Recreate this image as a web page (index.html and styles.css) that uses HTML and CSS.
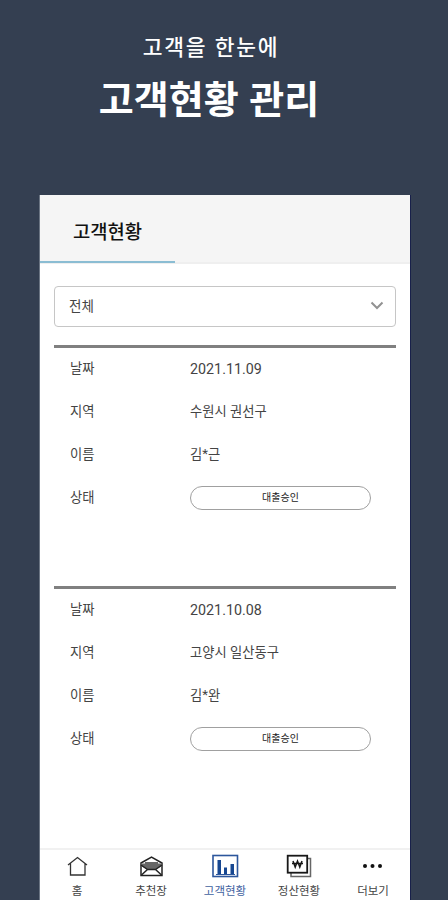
FILE: index.html
```
<!DOCTYPE html>
<html lang="ko">
<head>
<meta charset="UTF-8">
<meta name="viewport" content="width=device-width, initial-scale=1.0">
<title>고객현황 관리</title>
<link rel="stylesheet" href="styles.css">
</head>
<body>

<div class="intro">
    <p class="intro-sub">고객을 한눈에</p>
    <h1 class="intro-title">고객현황 관리</h1>
</div>

<div class="phone">
    <div class="page-head">
        <h2 class="page-tab">고객현황</h2>
    </div>

    <div class="content">
        <div class="select">
            <span>전체</span>
            <svg width="14" height="9" viewBox="0 0 14 9" fill="none" stroke="#929292" stroke-width="2">
                <path d="M1.5 1.5L7 7L12.5 1.5"/>
            </svg>
        </div>

        <dl class="customer">
            <dt>날짜</dt><dd class="date">2021.11.09</dd>
            <dt>지역</dt><dd>수원시 권선구</dd>
            <dt>이름</dt><dd>김<span class="mask">*</span>근</dd>
            <dt>상태</dt><dd><span class="status">대출승인</span></dd>
        </dl>

        <dl class="customer">
            <dt>날짜</dt><dd class="date">2021.10.08</dd>
            <dt>지역</dt><dd>고양시 일산동구</dd>
            <dt>이름</dt><dd>김<span class="mask">*</span>완</dd>
            <dt>상태</dt><dd><span class="status">대출승인</span></dd>
        </dl>
    </div>

    <nav class="tabbar">
        <a class="tab">
            <svg width="28" height="24" viewBox="0 0 28 24" fill="none" stroke="#333" stroke-width="1.3">
                <path d="M5 11L14.500 3.500l9.500 7.500M7.500 9.500v11.500h14.500V9.500"/>
            </svg>
            <span>홈</span>
        </a>
        <a class="tab">
            <svg width="28" height="24" viewBox="0 0 28 24" fill="none" stroke="#222" stroke-width="1.5">
                <path d="M4 9L14.500 3L25 9v12.500H4z"/>
                <path d="M4 9.500h4V8h13v1.500h4v2.500l-6 3.500h-9L4 12z" fill="#666" stroke="none"/>
                <path d="M4 11l6.500 4.500M25 11l-6.500 4.500M4.500 21l6-5.500h8l6 5.500"/>
            </svg>
            <span>추천장</span>
        </a>
        <a class="tab active">
            <svg width="28" height="24" viewBox="0 0 28 24">
                <rect x="2" y="1.500" width="24.500" height="21" fill="none" stroke="#2c569c" stroke-width="1.6"/>
                <path d="M6.500 6h3.500v14.500H6.500zM13 13.500h3v7h-3zM19.500 10h3.500v10.500h-3.500z" fill="#174791"/>
                <path d="M5 20.500h19" stroke="#2c569c" stroke-width="1"/>
            </svg>
            <span>고객현황</span>
        </a>
        <a class="tab">
            <svg width="28" height="24" viewBox="0 0 28 24" fill="none" stroke="#181818">
                <path d="M22 4.500h3.500v18H6V19" stroke="#666" stroke-width="1.5"/>
                <rect x="2.700" y="1.700" width="19.500" height="17" stroke-width="1.8"/>
                <path d="M8 7l2.200 6 2.300-6 2.300 6L17 7M7 9.500h11" stroke-width="1.5"/>
            </svg>
            <span>정산현황</span>
        </a>
        <a class="tab">
            <svg width="28" height="24" viewBox="0 0 28 24" fill="#111">
                <circle cx="6" cy="12" r="2"/>
                <circle cx="13.500" cy="12" r="2"/>
                <circle cx="21" cy="12" r="2"/>
            </svg>
            <span>더보기</span>
        </a>
    </nav>
</div>

</body>
</html>
```

FILE: styles.css
```
* {
    box-sizing: border-box;
}
body {
    margin: 0;
    height: 100vh;
    overflow: hidden;
    display: flex;
    flex-direction: column;
    background-color: #343f51;
    font-family: "Noto Sans CJK KR", sans-serif;
    color: #444;
}
.intro {
    height: 195px;
    flex: none;
    padding: 31px 30px 0 0;
    text-align: center;
    color: #fff;
}
.intro-sub {
    margin: 0 0 0 4px;
    font-size: 21.5px;
    line-height: 30px;
    letter-spacing: 1.7px;
    font-weight: 500;
}
.intro-title {
    margin: 9px 0 0;
    font-size: 38px;
    line-height: 54px;
    font-weight: 700;
}

/* phone screen */
.phone {
    flex: 1;
    width: 370px;
    margin-left: 40px;
    display: flex;
    flex-direction: column;
    background-color: #fff;
    box-shadow: 1px 0 0 #18204a, -1px 0 0 #6b7583;
}
.page-head {
    height: 69px;
    border-bottom: 2px solid #efefef;
    background-color: #f5f5f5;
}
.page-tab {
    width: 135px;
    height: 68px;
    margin: 0;
    padding-left: 33px;
    border-bottom: 2px solid #8bbdd3;
    font-size: 18.8px;
    line-height: 71px;
    font-weight: 500;
    color: #111;
}
.content {
    flex: 1;
    padding: 22px 14px 0;
}
.select {
    display: flex;
    align-items: center;
    justify-content: space-between;
    height: 41px;
    margin-bottom: 18px;
    padding: 0 11px 2px 14px;
    border: 1px solid #c6c6c6;
    border-radius: 4px;
    font-size: 13.5px;
}
.select span {
    padding-bottom: 2px;
}
.customer {
    display: grid;
    grid-template-columns: 120px 181px;
    grid-auto-rows: 43px;
    height: 241px;
    margin: 0;
    padding-left: 16px;
    border-top: 3px solid #808080;
    font-family: Roboto, "Noto Sans CJK KR", sans-serif;
    font-size: 13.3px;
    line-height: 42px;
}
.customer dd {
    margin: 0;
}
.customer .date {
    font-size: 14.3px;
}
.mask {
    line-height: 1;
    vertical-align: 1px;
}
.status {
    display: block;
    height: 24px;
    margin-top: 9px;
    border: 1px solid #a0a0a0;
    border-radius: 12px;
    font-size: 10px;
    line-height: 21px;
    text-align: center;
    color: #222;
}

/* bottom menu */
.tabbar {
    display: flex;
    height: 52px;
    border-top: 2px solid #f1f1f1;
}
.tab {
    flex: 1;
    display: flex;
    flex-direction: column;
    align-items: center;
    padding-top: 4px;
    font-size: 11.5px;
    line-height: 16px;
}
.tab span {
    margin-top: 4px;
}
.tab.active {
    color: #3f629f;
}
```
